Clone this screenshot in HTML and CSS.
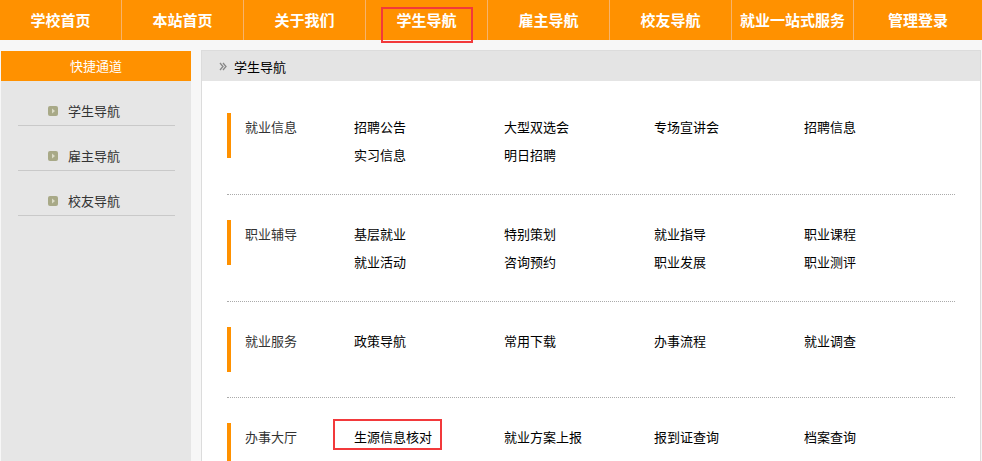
FILE: index.html
```html
<!DOCTYPE html>
<html lang="zh-CN">
<head>
    <meta charset="UTF-8">
    <meta name="viewport" content="width=device-width, initial-scale=1.0">
    <title>学生导航</title>
    <link rel="stylesheet" href="styles.css">
</head>
<body>
    <div class="top-nav">
        <a href="#">学校首页</a>
        <a href="#">本站首页</a>
        <a href="#">关于我们</a>
        <a href="#" class="marked">学生导航</a>
        <a href="#">雇主导航</a>
        <a href="#">校友导航</a>
        <a href="#">就业一站式服务</a>
        <a href="#">管理登录</a>
    </div>

    <div class="wrapper">
        <div class="sidebar">
            <div class="sidebar-title">快捷通道</div>
            <ul class="side-menu">
                <li><span class="dot"><svg width="10" height="10" viewBox="0 0 10 10"><rect width="10" height="10" rx="2" fill="#a8a987"/><path d="M4 2.5 L7 5 L4 7.5 Z" fill="#dcdcc8"/></svg></span>学生导航</li>
                <li><span class="dot"><svg width="10" height="10" viewBox="0 0 10 10"><rect width="10" height="10" rx="2" fill="#a8a987"/><path d="M4 2.5 L7 5 L4 7.5 Z" fill="#dcdcc8"/></svg></span>雇主导航</li>
                <li><span class="dot"><svg width="10" height="10" viewBox="0 0 10 10"><rect width="10" height="10" rx="2" fill="#a8a987"/><path d="M4 2.5 L7 5 L4 7.5 Z" fill="#dcdcc8"/></svg></span>校友导航</li>
            </ul>
        </div>

        <div class="main">
            <div class="crumb">
                <svg class="crumb-icon" width="8" height="9" viewBox="0 0 8 9">
                    <path d="M1 1 L4 4.5 L1 8" fill="none" stroke="#888" stroke-width="1.3"/>
                    <path d="M4 1 L7 4.5 L4 8" fill="none" stroke="#888" stroke-width="1.3"/>
                </svg>
                学生导航
            </div>

            <div class="content">
                <div class="section">
                    <div class="section-title">就业信息</div>
                    <div class="links">
                        <a href="#">招聘公告</a>
                        <a href="#">大型双选会</a>
                        <a href="#">专场宣讲会</a>
                        <a href="#">招聘信息</a>
                        <a href="#">实习信息</a>
                        <a href="#">明日招聘</a>
                    </div>
                </div>

                <div class="section">
                    <div class="section-title">职业辅导</div>
                    <div class="links">
                        <a href="#">基层就业</a>
                        <a href="#">特别策划</a>
                        <a href="#">就业指导</a>
                        <a href="#">职业课程</a>
                        <a href="#">就业活动</a>
                        <a href="#">咨询预约</a>
                        <a href="#">职业发展</a>
                        <a href="#">职业测评</a>
                    </div>
                </div>

                <div class="section">
                    <div class="section-title">就业服务</div>
                    <div class="links">
                        <a href="#">政策导航</a>
                        <a href="#">常用下载</a>
                        <a href="#">办事流程</a>
                        <a href="#">就业调查</a>
                    </div>
                </div>

                <div class="section">
                    <div class="section-title">办事大厅</div>
                    <div class="links">
                        <a href="#"><span class="marked-link">生源信息核对</span></a>
                        <a href="#">就业方案上报</a>
                        <a href="#">报到证查询</a>
                        <a href="#">档案查询</a>
                    </div>
                </div>
            </div>
        </div>
    </div>
</body>
</html>
```

FILE: styles.css
```css
html, body {
    height: 100%;
}

body {
    margin: 0;
    padding: 0;
    font-family: "Noto Sans CJK SC", "Liberation Sans", sans-serif;
    font-size: 13px;
    background: #f7f7f7;
    overflow: hidden;
}

a {
    text-decoration: none;
}

/* верхнее меню */
.top-nav {
    display: flex;
    height: 40px;
    background: #ff9100;
}

.top-nav a {
    position: relative;
    width: 121px;
    text-align: center;
    line-height: 40px;
    color: #fff;
    font-size: 15px;
    font-weight: bold;
    border-right: 1px solid #f7b36b;
}

.top-nav a:last-child {
    flex: 1;
    border-right: none;
}

.top-nav a.marked::after {
    content: "";
    position: absolute;
    left: 50%;
    top: 7px;
    width: 92px;
    height: 36px;
    margin-left: -46px;
    border: 2px solid #f2393b;
    box-sizing: border-box;
}

.wrapper {
    display: flex;
    gap: 10px;
    padding: 10px 1px 0 1px;
    height: 100%;
    box-sizing: border-box;
}

/* левая колонка */
.sidebar {
    width: 190px;
    flex-shrink: 0;
    margin-top: 1px;
    background: #e6e6e6;
}

.sidebar-title {
    height: 30px;
    line-height: 30px;
    text-align: center;
    background: #ff9100;
    color: #fff;
}

.side-menu {
    list-style: none;
    margin: 0 16px 0 17px;
    padding: 0;
}

.side-menu li {
    display: flex;
    align-items: center;
    padding: 16px 0 0 30px;
    line-height: 28px;
    color: #333;
    border-bottom: 1px solid #c9c9c9;
}

.side-menu .dot {
    display: flex;
    margin-right: 10px;
}

/* основная часть */
.main {
    flex: 1;
    background: #fff;
    border: 1px solid #dcdcdc;
    border-bottom: none;
}

.crumb {
    display: flex;
    align-items: center;
    height: 30px;
    padding-left: 17px;
    background: #e4e4e4;
    color: #000;
}

.crumb-icon {
    margin-right: 7px;
}

.content {
    padding: 7px 25px 0 25px;
}

.section {
    display: flex;
    width: 728px;
    padding: 25px 0;
    border-bottom: 1px dotted #aaa;
}

.section:last-child {
    border-bottom: none;
}

.section-title {
    width: 109px;
    height: 45px;
    padding-left: 14px;
    line-height: 28px;
    color: #333;
    border-left: 4px solid #ff9100;
    flex-shrink: 0;
}

.links {
    display: grid;
    grid-template-columns: repeat(4, 150px);
    line-height: 28px;
}

.links a {
    color: #000;
}

.marked-link {
    position: relative;
}

.marked-link::after {
    content: "";
    position: absolute;
    left: -21px;
    right: -10px;
    top: -8px;
    bottom: -4px;
    border: 2px solid #f2393b;
}
```
